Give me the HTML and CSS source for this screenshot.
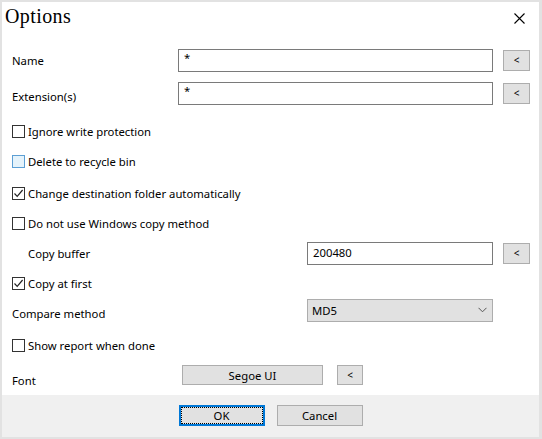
FILE: index.html
```html
<!DOCTYPE html>
<html>
<head>
<meta charset="utf-8">
<link rel="stylesheet" href="styles.css">
</head>
<body>
<div class="win">
  <div class="titlebar">
    <span class="title">Options</span>
    <svg class="close" width="11" height="11" viewBox="0 0 11 11"><path d="M0.5 0.5 L10.5 10.5 M10.5 0.5 L0.5 10.5" stroke="#000" stroke-width="1.1" fill="none"/></svg>
  </div>
  <div class="main">
    <div class="row">
      <span class="lbl lbl-w">Name</span>
      <div class="input wide">*</div>
      <div class="btn small">&lt;</div>
    </div>
    <div class="row r-ext">
      <span class="lbl lbl-w lbl-lo">Extension(s)</span>
      <div class="input wide">*</div>
      <div class="btn small">&lt;</div>
    </div>
    <div class="row r-ignore">
      <span class="cb"></span><span class="cbt">Ignore write protection</span>
    </div>
    <div class="row">
      <span class="cb hover"></span><span class="cbt">Delete to recycle bin</span>
    </div>
    <div class="row r-change">
      <span class="cb"><svg width="11" height="11" viewBox="0 0 11 11"><path d="M1.5 5.5 L4.2 8.3 L9.6 2" stroke="#222" stroke-width="1.2" fill="none"/></svg></span><span class="cbt">Change destination folder automatically</span>
    </div>
    <div class="row">
      <span class="cb"></span><span class="cbt">Do not use Windows copy method</span>
    </div>
    <div class="row">
      <span class="lbl lbl-indent">Copy buffer</span>
      <div class="input mid num">200480</div>
      <div class="btn small">&lt;</div>
    </div>
    <div class="row">
      <span class="cb"><svg width="11" height="11" viewBox="0 0 11 11"><path d="M1.5 5.5 L4.2 8.3 L9.6 2" stroke="#222" stroke-width="1.2" fill="none"/></svg></span><span class="cbt">Copy at first</span>
    </div>
    <div class="row r-compare">
      <span class="lbl lbl-wide lbl-lo2">Compare method</span>
      <div class="combo"><span>MD5</span><svg width="9" height="6" viewBox="0 0 9 6"><path d="M0.5 0.8 L4.5 4.8 L8.5 0.8" stroke="#555" stroke-width="1" fill="none"/></svg></div>
    </div>
    <div class="row r-show">
      <span class="cb"></span><span class="cbt">Show report when done</span>
    </div>
    <div class="row">
      <span class="lbl lbl-font lbl-lo3">Font</span>
      <div class="btn fontbtn">Segoe UI</div>
      <div class="btn small2">&lt;</div>
    </div>
  </div>
  <div class="footer">
    <div class="btn dlg ok"><span>OK</span></div>
    <div class="btn dlg">Cancel</div>
  </div>
</div>
</body>
</html>
```
FILE: styles.css
```css
html, body {
  margin: 0;
  padding: 0;
  background: #fff;
}
.win {
  width: 542px;
  height: 439px;
  box-sizing: border-box;
  border-style: solid;
  border-color: #e2e2e2;
  border-width: 2px 3px 2px 2px;
  background: #fff;
  display: flex;
  flex-direction: column;
  font-family: "Noto Sans", "Open Sans", sans-serif;
  font-size: 11.3px;
  color: #000;
}
.titlebar {
  height: 38px;
  display: flex;
  align-items: center;
  justify-content: space-between;
  padding: 0 14px 0 3px;
}
.title {
  font-family: "Liberation Serif", serif;
  font-size: 20px;
  letter-spacing: 0.4px;
  margin-top: -9px;
}
.close {
  margin-top: -6px;
}
.main {
  flex: 1;
  display: flex;
  flex-direction: column;
  gap: 6px;
  padding: 8px 0 0 10px;
}
.row {
  height: 24px;
  display: flex;
  align-items: center;
  flex-shrink: 0;
}
.r-ext { margin-top: 3px; }
.r-ignore { margin-top: 8px; }
.r-change { margin-top: 2px; }
.r-compare { margin-top: -3px; }
.r-show { margin-top: 5px; }
.lbl {
  white-space: nowrap;
}
.lbl-w { width: 166px; }
.lbl-indent { width: 279px; padding-left: 16px; }
.lbl-wide { width: 295px; }
.lbl-font { width: 170px; }
.lbl-lo { padding-top: 6px; }
.lbl-lo2 { padding-top: 6px; }
.lbl-lo3 { padding-top: 10px; }
.input {
  height: 23px;
  box-sizing: border-box;
  border: 1px solid #7a7a7a;
  padding: 1px 0 0 5px;
  line-height: 14px;
  background: #fff;
}
.input.wide { width: 315px; }
.input.mid { width: 186px; }
.input.num { line-height: 19px; padding-top: 0; }
.btn {
  box-sizing: border-box;
  background: #e1e1e1;
  border: 1px solid #adadad;
  display: flex;
  align-items: center;
  justify-content: center;
  font-size: 11px;
}
.btn.small {
  width: 27px;
  height: 21px;
  margin-left: 10px;
  font-size: 10px;
}
.btn.small2 {
  width: 26px;
  height: 20px;
  margin-left: 14px;
  font-size: 10px;
}
.btn.fontbtn {
  width: 141px;
  height: 20px;
  font-size: 11.3px;
}
.cb {
  width: 13px;
  height: 13px;
  box-sizing: border-box;
  border: 1px solid #333;
  background: #fff;
  display: flex;
  align-items: center;
  justify-content: center;
  margin-right: 3px;
}
.cb.hover {
  border-color: #5c9fd4;
  background: #e5f3fb;
}
.cbt {
  white-space: nowrap;
}
.combo {
  width: 186px;
  height: 23px;
  box-sizing: border-box;
  background: #e1e1e1;
  border: 1px solid #adadad;
  display: flex;
  align-items: center;
  justify-content: space-between;
  padding: 0 5px 0 4px;
}
.footer {
  height: 42px;
  flex-shrink: 0;
  background: #f0f0f0;
  display: flex;
  justify-content: center;
  align-items: flex-start;
  gap: 12px;
  padding-top: 10px;
  box-sizing: border-box;
}
.btn.dlg {
  width: 86px;
  height: 21px;
  font-size: 11.3px;
}
.btn.ok {
  border-color: #0078d7;
  box-shadow: inset 0 0 0 1px #0078d7;
  outline: 1px dotted #000;
  outline-offset: -3px;
}
```
